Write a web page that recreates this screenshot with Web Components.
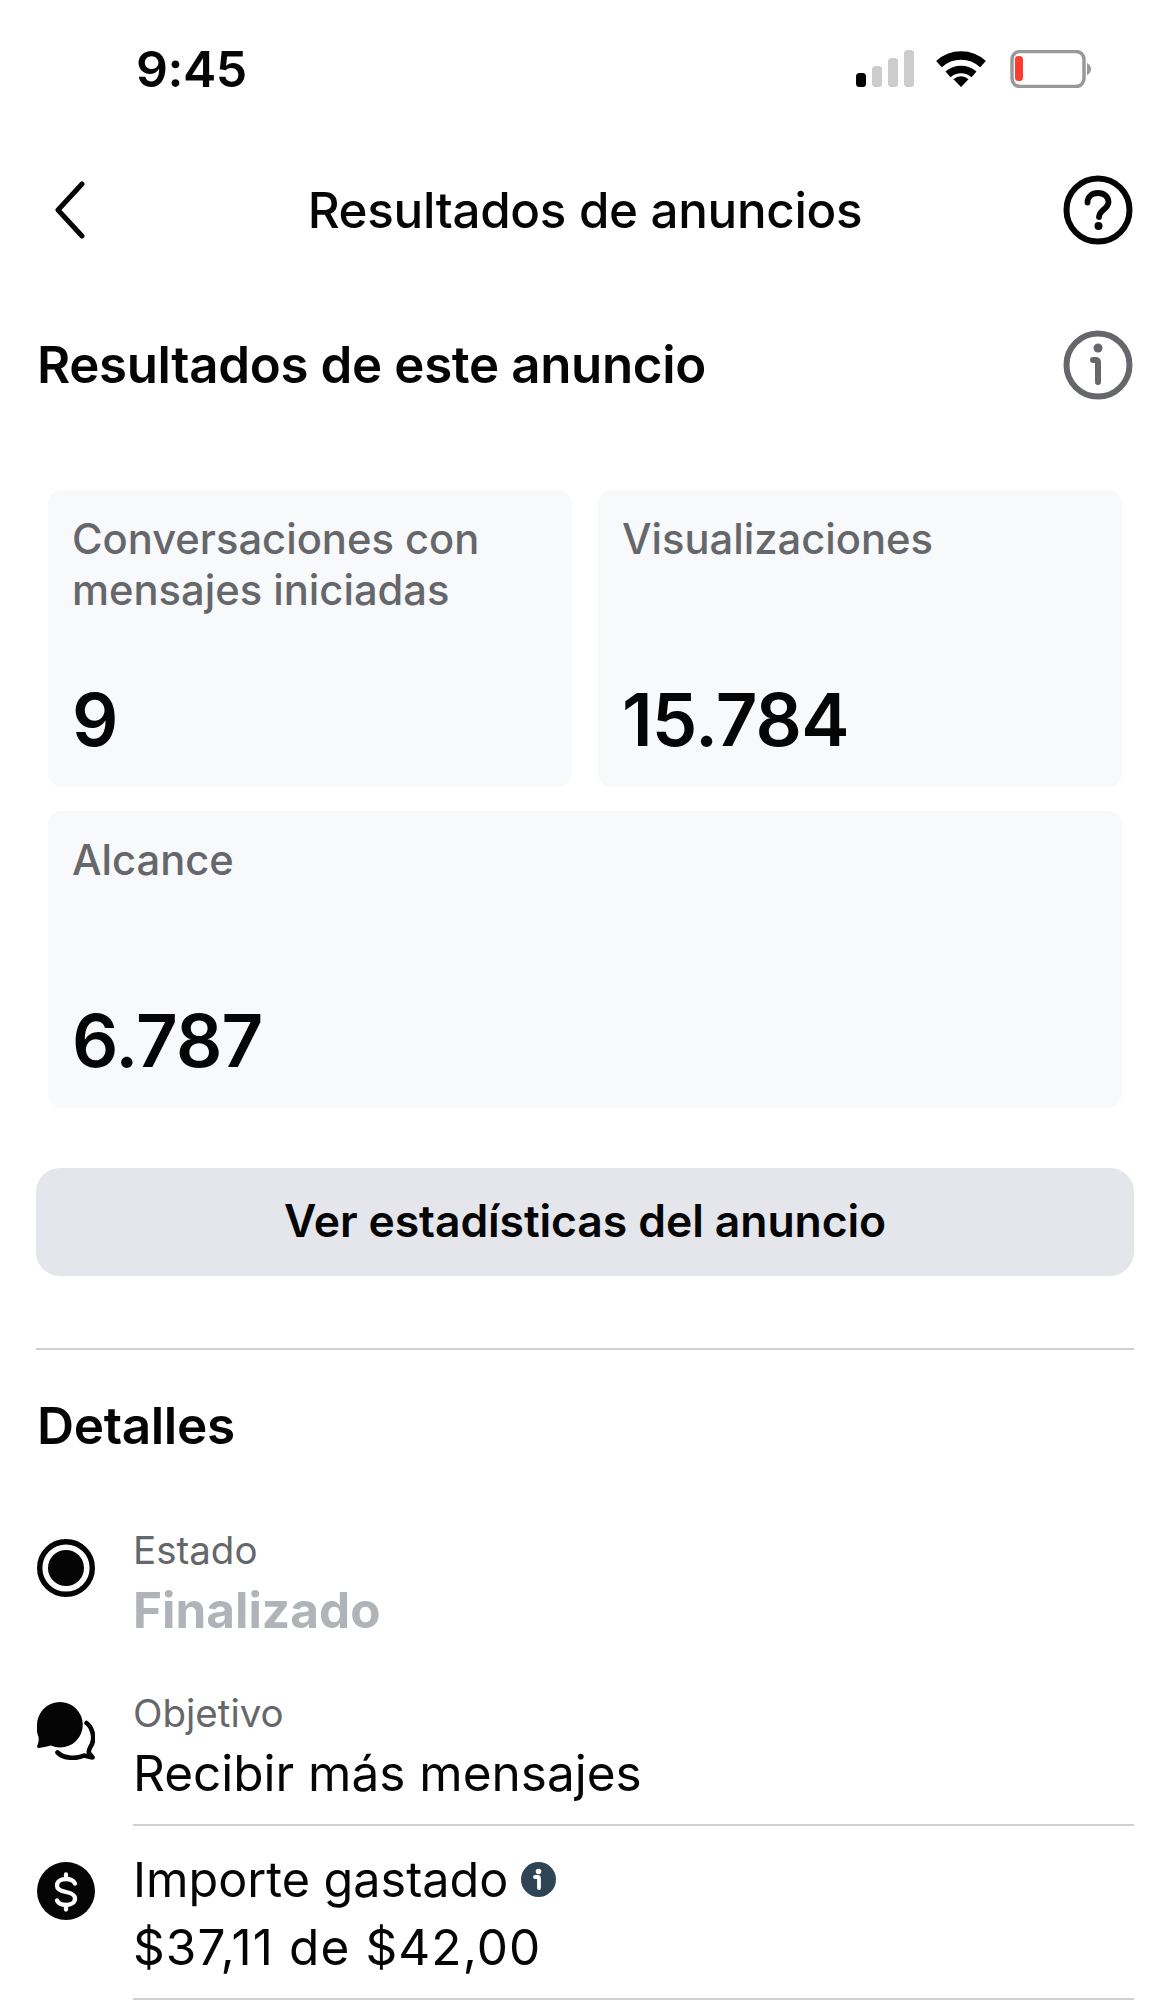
<!DOCTYPE html>
<html lang="es"><head><meta charset="utf-8"><title>Resultados de anuncios</title>
<style>
html,body{margin:0;padding:0;background:#fff}
body{width:1170px;height:2009px;overflow:hidden;font-family:Inter,"Liberation Sans",sans-serif;color:#050505;-webkit-font-smoothing:antialiased}
</style></head><body>
<ad-page>
  <status-bar time="9:45"></status-bar>
  <nav-bar title="Resultados de anuncios"></nav-bar>
  <section-head info>Resultados de este anuncio</section-head>
  <metric-grid>
    <metric-card label="Conversaciones con mensajes iniciadas" value="9"></metric-card>
    <metric-card label="Visualizaciones" value="15.784"></metric-card>
    <metric-card wide label="Alcance" value="6.787"></metric-card>
  </metric-grid>
  <action-button>Ver estadísticas del anuncio</action-button>
  <hr-line></hr-line>
  <section-head class="details">Detalles</section-head>
  <detail-row kind="status" label="Estado" value="Finalizado" muted></detail-row>
  <detail-row kind="goal" label="Objetivo" value="Recibir más mensajes" sep></detail-row>
  <detail-row kind="money" label="Importe gastado" value="$37,11 de $42,00" big sep></detail-row>
</ad-page>
<script>
const def=(name,css,html)=>customElements.define(name,class extends HTMLElement{
  constructor(){super();this.attachShadow({mode:'open'})}
  connectedCallback(){const a=n=>this.getAttribute(n);
    this.shadowRoot.innerHTML=`<style>${css}</style>`+(typeof html==='function'?html(a,this):html);}
});
def('ad-page',':host{display:block;width:1170px}','<slot></slot>');
def('status-bar',`:host{display:flex;height:118px;box-sizing:border-box;padding:0 79px 0 136px;align-items:flex-start;justify-content:space-between}
 .t{font-size:50px;font-weight:600;line-height:50px;margin-top:44px;letter-spacing:-.5px}
 .i{display:flex;margin-top:50px;margin-left:auto}
 svg{display:block}`,a=>`<span class="t">${a('time')}</span><div class="i">
 <svg width="235" height="38" viewBox="0 0 235 38">
  <rect x="0" y="23" width="10" height="14" rx="3.5" fill="#000"/>
  <rect x="16" y="16" width="10" height="21" rx="3.5" fill="#ccc"/>
  <rect x="32" y="8" width="10" height="29" rx="3.5" fill="#ccc"/>
  <rect x="48" y="0" width="10" height="37" rx="3.5" fill="#ccc"/>
  <g fill="none" stroke="#000">
   <path d="M83 14.2A32.5 32.5 0 0 1 127 14.2" stroke-width="8.5"/>
   <path d="M92 24.4A19.5 19.5 0 0 1 118 24.4" stroke-width="7.5"/>
  </g>
  <path d="M105 37 97.500 29.200A11 11 0 0 1 112.500 29.200Z" fill="#000"/>
  <rect x="156" y="1.500" width="72" height="35" rx="8" fill="none" stroke="#999" stroke-width="3.500"/>
  <rect x="159" y="6" width="8" height="25" rx="3.500" fill="#ff3b30"/>
  <path d="M231 13q4 2 4 6t-4 6Z" fill="#999"/>
 </svg></div>`);
def('nav-bar',`:host{display:flex;position:relative;height:184px;box-sizing:border-box;padding:0 37px 0 54px;align-items:center;margin-bottom:28px}
 .t{position:absolute;left:0;width:1170px;top:62px;text-align:center;font-size:49.300px;font-weight:450;line-height:60px;letter-spacing:-.3px}
 .w{display:flex;justify-content:space-between;align-items:center;width:100%;height:100px}
 svg{display:block}`,a=>`<div class="w"><svg width="32" height="58" viewBox="0 0 32 58"><path d="M28 3 4 29l24 26" fill="none" stroke="#050505" stroke-width="5" stroke-linecap="round" stroke-linejoin="round"/></svg>
 <svg width="70" height="70" viewBox="0 0 70 70"><circle cx="35" cy="35" r="31.500" fill="none" stroke="#050505" stroke-width="6"/><path d="M24.500 27.500c0-6 4.800-9.500 10.500-9.500 6 0 10.500 3.700 10.500 9 0 7-9 7.500-9.500 15" fill="none" stroke="#050505" stroke-width="5.800" stroke-linecap="round"/><circle cx="35.500" cy="51" r="4" fill="#050505"/></svg></div>
 <div class="t">${a('title')}</div>`);
def('section-head',`:host{display:flex;align-items:center;justify-content:space-between;box-sizing:border-box;height:70px;padding:0 37px;font-size:51px;font-weight:600;line-height:70px;letter-spacing:-.35px}
 :host(.details){margin-top:40px;font-size:51.300px}
 svg{display:block}`,(a,el)=>`<slot></slot>${el.hasAttribute('info')?`<svg width="70" height="70" viewBox="0 0 70 70"><circle cx="35" cy="35" r="31.500" fill="none" stroke="#65676b" stroke-width="6"/><circle cx="35" cy="18" r="4.500" fill="#65676b"/><path d="M30 30h2.500q2.500 0 2.500 2.500V52" fill="none" stroke="#65676b" stroke-width="6" stroke-linecap="round"/></svg>`:''}`);
def('metric-grid',`:host{display:grid;grid-template-columns:524px 524px;gap:24px 26px;margin:90px 48px 0}`,'<slot></slot>');
def('metric-card',`:host{display:flex;flex-direction:column;justify-content:space-between;box-sizing:border-box;height:297px;padding:24px 24px 23px;background:#f8f9fb;border-radius:14px}
 :host([wide]){grid-column:1/3}
 .l{font-size:41.700px;font-weight:500;line-height:51px;color:#65676b;max-width:450px}
 .v{font-size:72.500px;font-weight:560;line-height:88px;letter-spacing:-.8px;color:#050505}`,a=>`<div class="l">${a('label')}</div><div class="v">${a('value')}</div>`);
def('action-button',`:host{display:flex;align-items:center;justify-content:center;box-sizing:border-box;height:108px;padding-bottom:2px;margin:60px 36px 0;background:#e4e6eb;border-radius:24px;font-size:44.500px;font-weight:600;letter-spacing:-.1px}`,'<slot></slot>');
def('hr-line',`:host{display:block;height:2px;background:#ced0d4;margin:72px 36px 0}`,'');
const ICONS={
status:`<svg width="58" height="58" viewBox="0 0 58 58"><circle cx="29" cy="29" r="26.300" fill="none" stroke="#050505" stroke-width="5.400"/><circle cx="29" cy="29" r="18" fill="#050505"/></svg>`,
goal:`<svg width="58" height="58" viewBox="0 0 58 58"><path d="M23 0a22.800 22.800 0 0 1 0 45.600q-5 0-9-2c-4 1-9 2.300-12 2.300-1.800 0-2.300-1.300-1.500-2.800 1-2 1.500-6 1-8.100A23 23 0 0 1 0 23 23 23 0 0 1 23 0Z" fill="#050505"/><path d="M49.500 21C55 25 58 35 55 42 53 46 51 48 52 51L55.500 55.500 47 53.500C40 57 27 57 20.500 50.500" fill="none" stroke="#050505" stroke-width="4.600" stroke-linecap="round" stroke-linejoin="round"/></svg>`,
money:`<svg width="58" height="58" viewBox="0 0 58 58"><circle cx="29" cy="29" r="29" fill="#050505"/><path d="M38 21.500c-1.500-3-4.500-4.500-9-4.500-5 0-9 2.500-9 6.500s3.500 5.500 9 6.500 9 2.500 9 6.500-4 6.500-9 6.500c-4.500 0-7.500-1.500-9-4.500M29 12.500v4.500M29 43v4.500" fill="none" stroke="#fff" stroke-width="4.300" stroke-linecap="round"/></svg>`};
const smallInfo=`<svg width="35" height="35" viewBox="0 0 35 35"><circle cx="17.500" cy="17.500" r="17.500" fill="#2f4454"/><circle cx="17.500" cy="9.500" r="2.800" fill="#fff"/><path d="M14 15h2.500q1.500 0 1.500 1.500V26" fill="none" stroke="#fff" stroke-width="3.800" stroke-linecap="round"/></svg>`;
def('detail-row',`:host{display:flex;align-items:flex-start;box-sizing:border-box;padding-left:37px;padding-right:36px}
 .ic{width:58px;height:58px;flex:none;margin-right:38px}
 svg{display:block}
 .b{flex:1;min-width:0;box-sizing:border-box}
 .l{font-size:38.500px;line-height:52px;color:#65676b}
 .v{font-size:49.500px;line-height:68px;font-weight:400}
 .m{color:#b0b3b8;font-weight:700}
 .lb{font-size:48.500px;line-height:66px;color:#050505;display:flex;align-items:center;gap:13px}
 .lb svg{margin-top:-2px}
 :host([kind=status]){margin-top:64px;height:163px}
 :host([kind=status]) .ic{margin-top:15px}
 :host([kind=goal]){height:139px}
 :host([kind=goal]) .ic{margin-top:15px}
 :host([kind=goal]) .b{height:139px;border-bottom:2px solid #ced0d4}
 :host([kind=money]){height:174px}
 :host([kind=money]) .ic{margin-top:36px}
 :host([kind=money]) .b{height:174px;padding-top:21px;border-bottom:2px solid #ced0d4}
 :host([kind=money]) .v{line-height:66px;margin-top:1px;letter-spacing:1.100px}`,(a,el)=>`<div class="ic">${ICONS[a('kind')]}</div><div class="b">${el.hasAttribute('big')?`<div class="lb">${a('label')}${smallInfo}</div>`:`<div class="l">${a('label')}</div>`}<div class="v ${el.hasAttribute('muted')?'m':''}">${a('value')}</div></div>`);
</script>
</body></html>
